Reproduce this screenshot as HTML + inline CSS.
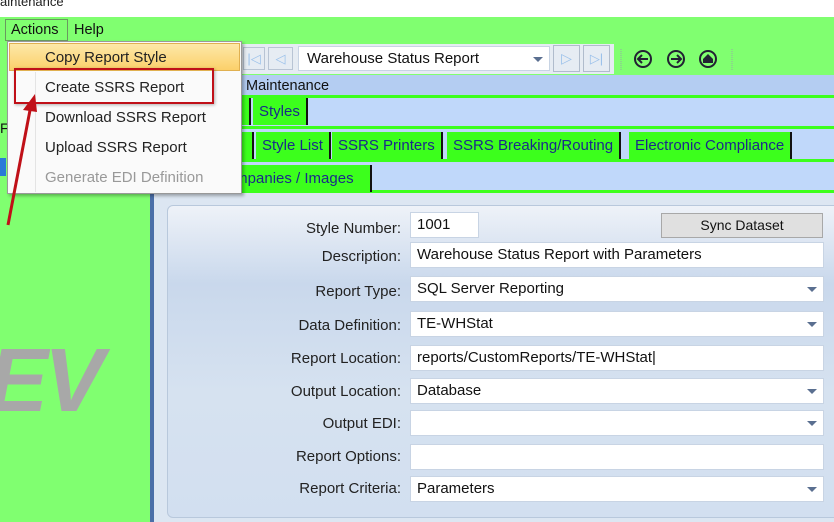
<!DOCTYPE html>
<html><head><style>
*{box-sizing:border-box;margin:0;padding:0}
body{width:834px;height:522px;overflow:hidden;position:relative;font-family:"Liberation Sans",sans-serif;font-size:14px;color:#111;background:#fff}
.a{position:absolute}
.tab{position:absolute;background:#3cff1c;color:#1a2a8a;font-size:15px;padding:2px 6px 0;line-height:24px;border-right:2px solid #111;height:27px}
.lbl{position:absolute;right:433px;text-align:right;font-size:15px;color:#222}
.inp{position:absolute;left:410px;background:#fff;border:1px solid #c8d4e4;font-size:15px;padding-left:6px;line-height:24px;height:26px;color:#111}
.dd::after{content:"";position:absolute;right:6px;top:10px;border-left:5px solid transparent;border-right:5px solid transparent;border-top:5px solid #5a6f90}
.mi{position:absolute;left:45px;font-size:15px;color:#222}
</style></head><body>
<div class="a" style="left:0;top:-6px;font-size:13px;color:#222">aintenance</div>
<div class="a" style="left:0;top:17px;width:834px;height:505px;background:#80ff70"></div>
<!-- menubar -->
<div class="a" style="left:5px;top:19px;width:63px;height:22px;border:1px solid #6a9a60;background:#80ff70"></div>
<div class="a" style="left:11px;top:22px;font-size:14.5px">Actions</div>
<div class="a" style="left:74px;top:22px;font-size:14.5px">Help</div>
<!-- toolbar -->
<div class="a" style="left:238px;top:44px;width:376px;height:30px;background:#e6ecf3"></div>
<div class="a" style="left:243px;top:47px;width:22px;height:23px;border:1px solid #b8c4d4;color:#9ac0ea;font-size:13px;text-align:center;line-height:21px">|◁</div>
<div class="a" style="left:268px;top:47px;width:25px;height:23px;border:1px solid #b8c4d4;color:#9ac0ea;font-size:13px;text-align:center;line-height:21px">◁</div>
<div class="a dd" style="left:298px;top:46px;width:252px;height:25px;background:#fff;border:1px solid #c8d4e4;font-size:15px;padding-left:8px;line-height:24px">Warehouse Status Report</div>
<div class="a" style="left:553px;top:45px;width:27px;height:27px;border:1px solid #b0bccc;color:#9ac0ea;text-align:center;line-height:25px;font-size:14px">▷</div>
<div class="a" style="left:583px;top:45px;width:27px;height:27px;border:1px solid #b0bccc;color:#9ac0ea;text-align:center;line-height:25px;font-size:13px">▷|</div>
<svg class="a" style="left:618px;top:44px" width="120" height="30">
<line x1="3" y1="5" x2="3" y2="26" stroke="#9aa" stroke-dasharray="1 1"/>
<circle cx="25" cy="15" r="8" fill="none" stroke="#223" stroke-width="2"/><path d="M30 15H20M24 11l-4 4 4 4" fill="none" stroke="#223" stroke-width="2"/>
<circle cx="58" cy="15" r="8" fill="none" stroke="#223" stroke-width="2"/><path d="M53 15h10M59 11l4 4-4 4" fill="none" stroke="#223" stroke-width="2"/>
<circle cx="90" cy="15" r="8" fill="none" stroke="#223" stroke-width="2"/><path d="M85 15l5-5 5 5v4h-10z" fill="#223"/>
<line x1="114" y1="5" x2="114" y2="26" stroke="#9aa" stroke-dasharray="1 1"/>
</svg>
<!-- right area -->
<div class="a" style="left:150px;top:75px;width:684px;height:447px;background:#dce6f2"></div>
<div class="a" style="left:150px;top:75px;width:4px;height:447px;background:#4a6fa8"></div>
<div class="a" style="left:154px;top:75px;width:680px;height:20px;background:#b4cdf2"></div>
<div class="a" style="left:246px;top:78px;font-size:14.5px">Maintenance</div>
<div class="a" style="left:154px;top:95px;width:680px;height:34px;background:#c0d8fa;border-top:3px solid #3cff1c;border-bottom:3px solid #3cff1c"></div>
<div class="a" style="left:154px;top:129px;width:680px;height:33px;background:#c0d8fa;border-bottom:3px solid #3cff1c"></div>
<div class="a" style="left:154px;top:162px;width:680px;height:31px;background:#c0d8fa;border-bottom:3px solid #3cff1c"></div>
<div class="tab" style="left:230px;top:98px;width:21px"></div>
<div class="tab" style="left:253px;top:98px">Styles</div>
<div class="tab" style="left:230px;top:132px;width:24px"></div>
<div class="tab" style="left:256px;top:132px">Style List</div>
<div class="tab" style="left:332px;top:132px">SSRS Printers</div>
<div class="tab" style="left:447px;top:132px">SSRS Breaking/Routing</div>
<div class="tab" style="left:629px;top:132px">Electronic Compliance</div>
<div class="tab" style="left:206px;top:165px;padding-left:10px;width:166px">Companies / Images</div>
<!-- form panel -->
<div class="a" style="left:167px;top:205px;width:680px;height:313px;border:1px solid #b8c8dc;border-radius:6px;background:linear-gradient(#eef2f8,#c9d8ec 25%,#d6e2f0 60%,#d2dff0)"></div>
<div class="lbl" style="top:220px">Style Number:</div>
<div class="inp" style="top:212px;width:69px">1001</div>
<div class="a" style="left:661px;top:213px;width:162px;height:25px;border:1px solid #a8a8a8;background:#e0e0e0;text-align:center;line-height:23px;font-size:14px">Sync Dataset</div>
<div class="lbl" style="top:248px">Description:</div>
<div class="inp" style="top:242px;width:414px">Warehouse Status Report with Parameters</div>
<div class="lbl" style="top:283px">Report Type:</div>
<div class="inp dd" style="top:276px;width:414px">SQL Server Reporting</div>
<div class="lbl" style="top:317px">Data Definition:</div>
<div class="inp dd" style="top:311px;width:414px">TE-WHStat</div>
<div class="lbl" style="top:350px">Report Location:</div>
<div class="inp" style="top:345px;width:414px">reports/CustomReports/TE-WHStat|</div>
<div class="lbl" style="top:383px">Output Location:</div>
<div class="inp dd" style="top:378px;width:414px">Database</div>
<div class="lbl" style="top:415px">Output EDI:</div>
<div class="inp dd" style="top:410px;width:414px"></div>
<div class="lbl" style="top:448px">Report Options:</div>
<div class="inp" style="top:444px;width:414px"></div>
<div class="lbl" style="top:480px">Report Criteria:</div>
<div class="inp dd" style="top:476px;width:414px">Parameters</div>
<!-- left -->
<div class="a" style="left:0;top:120px;font-size:14px">F</div>
<div class="a" style="left:0;top:158px;width:6px;height:18px;background:#2a7ad8"></div>
<div class="a" style="left:-12px;top:330px;font-size:90px;font-weight:bold;font-style:italic;color:#a8a8a8;letter-spacing:-4px">EV</div>
<!-- dropdown menu -->
<div class="a" style="left:7px;top:41px;width:235px;height:153px;background:#fafafa;border:1px solid #999;box-shadow:2px 2px 3px rgba(0,0,0,.3)"></div>
<div class="a" style="left:9px;top:43px;width:231px;height:28px;background:linear-gradient(#fde8a8,#fbd06a);border:1px solid #e0b050"></div>
<div class="a" style="left:35px;top:72px;width:1px;height:120px;background:#e4e4e4"></div>
<div class="mi" style="top:49px">Copy Report Style</div>
<div class="mi" style="top:79px">Create SSRS Report</div>
<div class="mi" style="top:109px">Download SSRS Report</div>
<div class="mi" style="top:139px">Upload SSRS Report</div>
<div class="mi" style="top:169px;color:#999">Generate EDI Definition</div>
<div class="a" style="left:14px;top:68px;width:200px;height:36px;border:2px solid #c01018;box-shadow:1px 1px 3px rgba(0,0,0,.3)"></div>
<svg class="a" style="left:0;top:90px" width="50" height="140"><line x1="8" y1="135" x2="31" y2="15" stroke="#c01018" stroke-width="3"/><path d="M35 4l-12 16 14 2z" fill="#c01018"/></svg>
</body></html>
